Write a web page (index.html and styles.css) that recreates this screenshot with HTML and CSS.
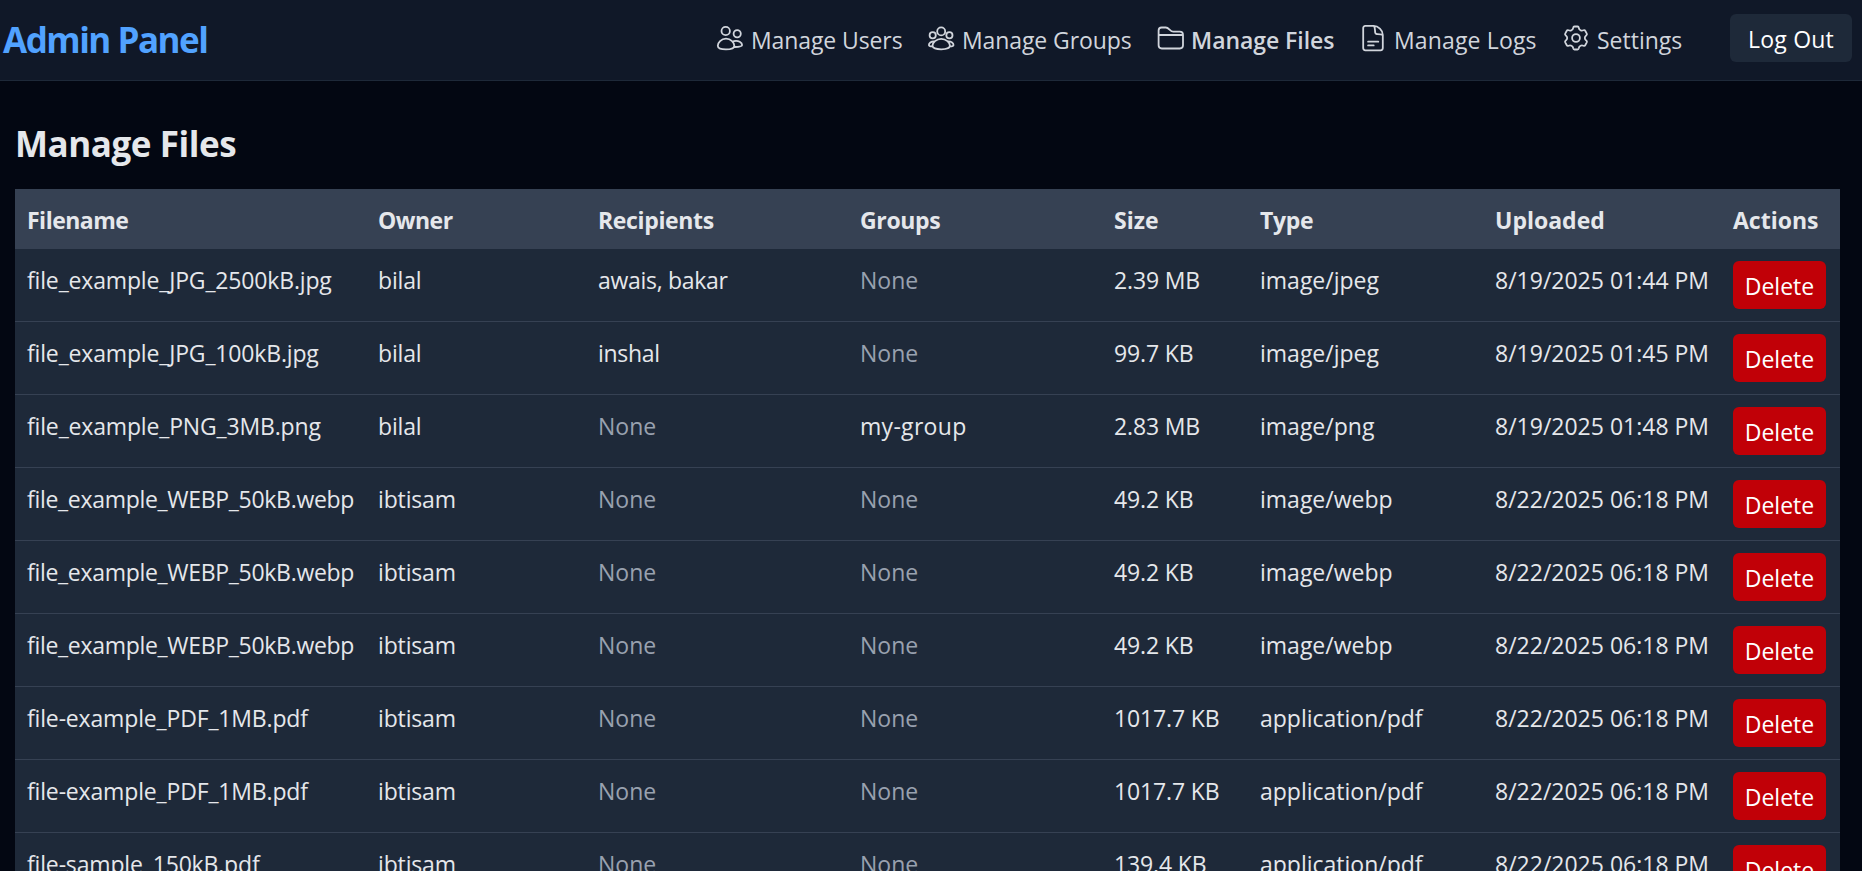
FILE: index.html
```
<!DOCTYPE html>
<html lang="en">
<head>
<meta charset="utf-8">
<title>Admin Panel</title>
<link rel="stylesheet" href="styles.css">
</head>
<body>
<header class="topbar">
  <div class="brand">Admin Panel</div>
  <nav class="nav">
    <a class="link users"><svg class="icon" viewBox="0 0 30 30"><circle cx="10.7" cy="8" r="4.2"/><circle cx="22.2" cy="10.8" r="3.6"/><path d="M11 15.7c5 0 8.3 3.9 8.3 7 0 2.900-3.300 3.700-8.300 3.700s-8.200-.8-8.200-3.700c0-3.100 3.300-7 8.200-7zM18.800 18.200c4.700-1.300 8.300 1.700 8.300 3.900 0 1.500-2.400 1.900-7.200 1.900"/></svg><span>Manage Users</span></a>
    <a class="link groups"><svg class="icon" viewBox="0 0 30 30"><circle cx="15.200" cy="8.400" r="4"/><circle cx="6.700" cy="12.200" r="3.100"/><circle cx="23.400" cy="12.200" r="3.100"/><path d="M15.200 15.800c5 0 8.700 4 8.700 6.800 0 2.600-3.500 3.700-8.700 3.700s-8.700-1.100-8.700-3.700c0-2.800 3.700-6.800 8.700-6.800zM8 18.300c-3 0-5.100 1.900-5.100 3.600 0 1 1.300 1.500 3.600 1.500M22.400 18.300c3 0 5.100 1.900 5.100 3.600 0 1-1.300 1.500-3.600 1.500"/></svg><span>Manage Groups</span></a>
    <a class="link files active"><svg class="icon" viewBox="0 0 30 30"><path d="M3.600 7.500a3 3 0 0 1 3-3h4.200c3.200 0 4.300 4.200 7.500 4.200h6.500a3.200 3.200 0 0 1 3.200 3.200v10.400a3.200 3.200 0 0 1-3.200 3.200H6.800a3.200 3.200 0 0 1-3.200-3.200zM3.600 12h24"/></svg><span>Manage Files</span></a>
    <a class="link logs"><svg class="icon" viewBox="0 0 30 30"><path d="M7.200 2.900h8.300c4.700 0 9.300 4.200 9.300 9v13.200a2.200 2.200 0 0 1-2.200 2.200H7.400a2.200 2.200 0 0 1-2.200-2.200V5a2 2 0 0 1 2-2.100zM15.900 3c1.200 1 1 3.700 1.300 6.700.1 1 .5 1.300 1.400 1.300 3 .1 5.600 0 6.200 1.500M10.100 18.700h10.200M10.100 22.400h5.600"/></svg><span>Manage Logs</span></a>
    <a class="link settings"><svg class="icon" viewBox="-15 -15 30 30"><circle r="3.9"/><path d="M-1.600-11.500H1.600Q2.600-11.500 2.800-10.200 3-8.600 4.500-7.800 5.800-7 7.400-7.700 8.700-8.300 9.200-7.300L10.800-4.400Q11.300-3.400 10.200-2.600 8.800-1.600 8.800 0 8.800 1.600 10.200 2.600 11.300 3.400 10.800 4.400L9.200 7.300Q8.700 8.300 7.400 7.700 5.800 7 4.500 7.800 3 8.600 2.800 10.200 2.600 11.500 1.600 11.500H-1.600Q-2.600 11.500-2.800 10.200-3 8.600-4.500 7.800-5.800 7-7.400 7.700-8.700 8.300-9.200 7.300L-10.800 4.400Q-11.300 3.400-10.200 2.600-8.800 1.600-8.800 0-8.800-1.600-10.200-2.600-11.300-3.400-10.800-4.400L-9.200-7.300Q-8.700-8.300-7.400-7.700-5.800-7-4.500-7.800-3-8.600-2.800-10.200-2.600-11.500-1.600-11.500z"/></svg><span>Settings</span></a>
  </nav>
  <button class="logout">Log Out</button>
</header>
<main class="page">
  <h1 class="title">Manage Files</h1>
  <table class="table">
    <colgroup><col class="c-name"><col class="c-owner"><col class="c-rec"><col class="c-groups"><col class="c-size"><col class="c-type"><col class="c-date"><col class="c-act"></colgroup>
    <thead><tr><th class="tight">Filename</th><th class="tight">Owner</th><th>Recipients</th><th>Groups</th><th class="even">Size</th><th>Type</th><th class="even">Uploaded</th><th class="even">Actions</th></tr></thead>
    <tbody>
      <tr><td>file_example_JPG_2500kB.jpg</td><td>bilal</td><td class="snug">awais, bakar</td><td class="none">None</td><td>2.39 MB</td><td>image/jpeg</td><td>8/19/2025 01:44 PM</td><td><button class="delete">Delete</button></td></tr>
      <tr><td>file_example_JPG_100kB.jpg</td><td>bilal</td><td class="snug">inshal</td><td class="none">None</td><td>99.7 KB</td><td>image/jpeg</td><td>8/19/2025 01:45 PM</td><td><button class="delete">Delete</button></td></tr>
      <tr><td>file_example_PNG_3MB.png</td><td>bilal</td><td class="none">None</td><td class="loose">my-group</td><td>2.83 MB</td><td>image/png</td><td>8/19/2025 01:48 PM</td><td><button class="delete">Delete</button></td></tr>
      <tr><td class="snug">file_example_WEBP_50kB.webp</td><td>ibtisam</td><td class="none">None</td><td class="none">None</td><td>49.2 KB</td><td>image/webp</td><td>8/22/2025 06:18 PM</td><td><button class="delete">Delete</button></td></tr>
      <tr><td class="snug">file_example_WEBP_50kB.webp</td><td>ibtisam</td><td class="none">None</td><td class="none">None</td><td>49.2 KB</td><td>image/webp</td><td>8/22/2025 06:18 PM</td><td><button class="delete">Delete</button></td></tr>
      <tr><td class="snug">file_example_WEBP_50kB.webp</td><td>ibtisam</td><td class="none">None</td><td class="none">None</td><td>49.2 KB</td><td>image/webp</td><td>8/22/2025 06:18 PM</td><td><button class="delete">Delete</button></td></tr>
      <tr><td>file-example_PDF_1MB.pdf</td><td>ibtisam</td><td class="none">None</td><td class="none">None</td><td>1017.7 KB</td><td>application/pdf</td><td>8/22/2025 06:18 PM</td><td><button class="delete">Delete</button></td></tr>
      <tr><td>file-example_PDF_1MB.pdf</td><td>ibtisam</td><td class="none">None</td><td class="none">None</td><td>1017.7 KB</td><td>application/pdf</td><td>8/22/2025 06:18 PM</td><td><button class="delete">Delete</button></td></tr>
      <tr><td>file-sample_150kB.pdf</td><td>ibtisam</td><td class="none">None</td><td class="none">None</td><td>139.4 KB</td><td>application/pdf</td><td>8/22/2025 06:18 PM</td><td><button class="delete">Delete</button></td></tr>
    </tbody>
  </table>
</main>
</body>
</html>
```
FILE: styles.css
```
* { box-sizing: border-box; }

html, body { height: 100%; overflow: hidden; }

body {
  margin: 0;
  background: #030712;
  color: #e5e7eb;
  font: 23px/36px "Open Sans", "Noto Sans", sans-serif;
}

/* Top bar */
.topbar {
  display: flex;
  align-items: center;
  height: 81px;
  padding: 0 10px 4px 3px;
  background: #101828;
  border-bottom: 1px solid #1e2939;
}

.brand {
  flex: 1;
  padding-top: 4px;
  color: #51a2ff;
  font-size: 35px;
  font-weight: 700;
  letter-spacing: -1.5px;
  white-space: nowrap;
}

.nav {
  display: grid;
  grid-template-columns: 211px 229px 203px 203px 169px;
}

.link {
  display: flex;
  align-items: center;
  gap: 6px;
  color: #d1d5dc;
  white-space: nowrap;
}

.link span { padding-top: 3px; }
.users, .groups { letter-spacing: -0.1px; }
.logs { letter-spacing: 0.15px; }
.active { font-weight: 600; letter-spacing: -0.05px; }

.icon {
  width: 30px;
  height: 30px;
  fill: none;
  stroke: currentColor;
  stroke-width: 1.8;
  stroke-linecap: round;
  stroke-linejoin: round;
}

.logout, .delete {
  display: block;
  height: 48px;
  margin: 0;
  padding: 7px 0 5px;
  border: 0;
  border-radius: 6px;
  color: #fff;
  font: inherit;
  text-align: center;
}

.logout {
  width: 122px;
  background: #1e2939;
  letter-spacing: 0.2px;
}

/* Content */
.page { padding: 36px 22px 0 15px; }

.title {
  margin: 0 0 22px;
  padding-top: 4px;
  font-size: 35px;
  line-height: 46px;
  font-weight: 700;
  letter-spacing: -0.45px;
}

.table {
  width: 1825px;
  table-layout: fixed;
  border-collapse: separate;
  border-spacing: 0;
  background: #1e2939;
}

.c-name { width: 351px; }
.c-owner { width: 220px; }
.c-rec { width: 262px; }
.c-groups { width: 254px; }
.c-size { width: 146px; }
.c-type { width: 235px; }
.c-date { width: 238px; }
.c-act { width: 119px; }

th, td {
  padding: 13px 12px 11px;
  text-align: left;
  vertical-align: top;
  white-space: nowrap;
}

th {
  background: #364153;
  font-weight: 700;
  letter-spacing: -0.35px;
}

.tight { letter-spacing: -0.5px; }
.even { letter-spacing: 0; }

td {
  height: 73px;
  padding-bottom: 0;
  border-bottom: 1px solid #364153;
}

td:last-child { padding-top: 12px; }
td:first-child { letter-spacing: -0.16px; }
td:nth-child(2), td:nth-child(5) { letter-spacing: -0.15px; }

td.snug, td.snug:first-child { letter-spacing: -0.3px; }
.loose { letter-spacing: 0.3px; }
.none { color: #99a1af; }

.delete {
  width: 93px;
  background: #c10007;
}
```
